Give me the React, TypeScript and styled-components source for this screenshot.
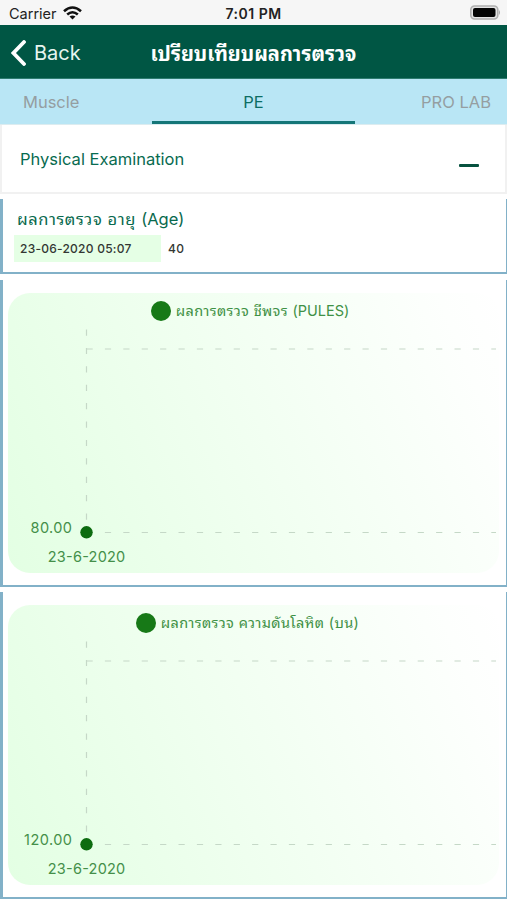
import React from "react";
import styled, { createGlobalStyle } from "styled-components";

const Global = createGlobalStyle`
  * { box-sizing: border-box; }
  body { margin: 0; background: #fff; font-family: Inter, "Noto Sans Thai Looped", "Noto Sans Thai", Loma, "Noto Sans", sans-serif; }
`;

const Screen = styled.div`
  width: 507px;
  height: 900px;
  overflow: hidden;
  display: flex;
  flex-direction: column;
  background: #fff;
`;

const StatusBar = styled.div`
  height: 25px;
  flex: none;
  display: grid;
  grid-template-columns: 1fr auto 1fr;
  align-items: center;
  padding: 3px 6px 0 9px;
  background: #f6f6f6;
  color: #222;
  font-size: 14.5px;
  line-height: 20px;
`;

const Carrier = styled.div`
  display: flex;
  align-items: center;
  gap: 6px;
`;

const SignalIcon = styled.svg`
  display: block;
  margin-bottom: 2px;
`;

const Clock = styled.div`
  margin-right: 3px;
  font-weight: 600;
  font-size: 14px;
  letter-spacing: 0.5px;
`;

const Battery = styled.svg`
  justify-self: end;
  display: block;
  margin-bottom: 3px;
`;

const NavBar = styled.header`
  height: 54px;
  flex: none;
  display: grid;
  grid-template-columns: 1fr auto 1fr;
  align-items: center;
  padding: 1px 11px 0;
  background: #005644;
  border-bottom: 1px solid #2d7c70;
  color: #fff;
`;

const BackButton = styled.div`
  display: flex;
  align-items: center;
  gap: 8px;
  padding-top: 1px;
  color: #e6f5f0;
  font-size: 20px;
`;

const Latin = styled.span`
  white-space: nowrap;
`;

const Thai = styled.span<{ $track: number }>`
  white-space: pre;
  letter-spacing: ${(p) => p.$track}px;
`;

const NavTitle = styled.h1`
  margin: 0;
  padding-top: 4px;
  font-size: 20px;
  line-height: 28px;
  font-weight: 700;
`;

const Tabs = styled.nav`
  height: 46px;
  flex: none;
  display: grid;
  grid-template-columns: 152px 203px 152px;
  background: #b9e6f5;
  border-bottom: 1px solid #dcecf0;
`;

const Tab = styled.div<{ $active?: boolean; $align?: string; $pad?: string }>`
  padding: ${(p) => p.$pad ?? "0"};
  text-align: ${(p) => p.$align ?? "center"};
  font-size: 16.5px;
  line-height: 46px;
  height: 45px;
  color: ${(p) => (p.$active ? "#0c6d63" : "#959ea1")};
  box-shadow: ${(p) => (p.$active ? "inset 0 -3px #147678" : "none")};
`;

const SectionHeader = styled.div`
  height: 69px;
  flex: none;
  display: flex;
  align-items: center;
  justify-content: space-between;
  padding: 0 26px 0 18px;
  border: 2px solid #f1f1f1;
  border-top-width: 0;
  color: #086b50;
  font-size: 16.5px;
`;

const Minus = styled.div`
  width: 20px;
  height: 3px;
  margin-top: 14px;
  border-radius: 1px;
  background: #07523f;
`;

const Panels = styled.main`
  display: flex;
  flex-direction: column;
  gap: 5px;
  padding-top: 5px;
`;

const Panel = styled.section<{ $height: number }>`
  height: ${(p) => p.$height}px;
  flex: none;
  border: solid #82b1c8;
  border-width: 0 1px 2px 3px;
`;

const AgePanel = styled(Panel)`
  padding: 7px 11px;
  margin-bottom: 1px;
`;

const AgeTitle = styled.div`
  padding-left: 3px;
  height: 28px;
  line-height: 26px;
  font-size: 16.5px;
  color: #08694d;
`;

const Reading = styled.div`
  display: flex;
  align-items: center;
  gap: 7px;
  color: #333733;
  font-size: 12px;
  font-weight: 500;
  line-height: 28px;
  letter-spacing: 0.25px;
`;

const Stamp = styled.div`
  width: 147px;
  height: 27px;
  padding-left: 6px;
  background: #e5ffe5;
`;

const Value = styled.div`
  padding-top: 1px;
`;

const ChartCard = styled.div`
  display: flex;
  flex-direction: column;
  height: 280px;
  margin: 13px 7px 0 5px;
  border-radius: 22px;
  background: linear-gradient(68deg, #e3ffe3 0%, #eeffee 38%, #fdfffd 90%, #ffffff 100%);
`;

const Legend = styled.div<{ $nudge: number }>`
  height: 36px;
  flex: none;
  display: flex;
  align-items: center;
  justify-content: center;
  gap: 5px;
  padding-right: ${(p) => p.$nudge}px;
  color: #3f9145;
  font-size: 14.5px;
  line-height: 20px;
`;

const Swatch = styled.span`
  width: 20px;
  height: 20px;
  border-radius: 50%;
  background: #177917;
`;

const Plot = styled.svg`
  display: block;
  fill: #448f49;
  font-size: 14.5px;
`;

interface ChartProps {
  label: string;
  unit?: string;
  value: string;
  nudge: number;
}

function Chart({ label, unit, value, nudge }: ChartProps) {
  return (
    <Panel $height={307}>
      <ChartCard>
        <Legend $nudge={nudge}>
          <Swatch />
          <span>
            <Thai $track={0.36}>{label}</Thai>
            {unit && <Latin>{unit}</Latin>}
          </span>
        </Legend>
        <Plot width="491" height="244" viewBox="8 329 491 244">
          <g stroke="#c5d8c7" strokeWidth="1.2" strokeDasharray="6.2 12.2">
            <path d="M86.5 329.5V532" />
            <path d="M86.5 349H496" />
            <path d="M86.5 532.5H496" />
          </g>
          <circle cx="86.5" cy="532.3" r="6.2" fill="#0d6c10" />
          <text x="72" y="532.5" textAnchor="end" textLength={value.length > 5 ? 48 : 41.5}>
            {value}
          </text>
          <text x="86.5" y="562" textAnchor="middle" textLength="77.5">
            23-6-2020
          </text>
        </Plot>
      </ChartCard>
    </Panel>
  );
}

export default function App() {
  return (
    <Screen>
      <Global />
      <StatusBar>
        <Carrier>
          <span>Carrier</span>
          <SignalIcon width="19" height="14" viewBox="0 0 19 14" fill="none" stroke="#111" strokeWidth="2.6">
            <path d="M1 5.2Q9.5-2.2 18 5.2" />
            <path d="M4.2 8.5Q9.5 4 14.8 8.5" />
            <path d="M9.5 13.5L6.5 10.6Q9.5 8.2 12.5 10.6Z" fill="#111" stroke="none" />
          </SignalIcon>
        </Carrier>
        <Clock>7:01 PM</Clock>
        <Battery width="31" height="15" viewBox="0 0 31 15">
          <rect x="0.8" y="1" width="27" height="13" rx="3.8" fill="#e4e4e4" stroke="#b0b0b0" strokeWidth="1.6" />
          <rect x="3" y="3" width="22.5" height="9" rx="2" fill="#050505" />
          <path d="M29 5Q31 7.5 29 10Z" fill="#aaa" />
        </Battery>
      </StatusBar>
      <NavBar>
        <BackButton>
          <svg width="15" height="26" viewBox="0 0 15 26" fill="none" stroke="#fff" strokeWidth="3.8" strokeLinecap="round">
            <path d="M13 2L2.4 13L13 24" />
          </svg>
          <Latin>Back</Latin>
        </BackButton>
        <NavTitle>
          <Thai $track={0}>เปรียบเทียบผลการตรวจ</Thai>
        </NavTitle>
      </NavBar>
      <Tabs>
        <Tab $align="left" $pad="0 0 0 23px">Muscle</Tab>
        <Tab $active>PE</Tab>
        <Tab $align="right" $pad="0 16px 0 0">PRO LAB</Tab>
      </Tabs>
      <SectionHeader>
        <Latin>Physical Examination</Latin>
        <Minus />
      </SectionHeader>
      <Panels>
        <AgePanel $height={75}>
          <AgeTitle>
            <Thai $track={0.6}>{"ผลการตรวจ อายุ "}</Thai>
            <Latin>(Age)</Latin>
          </AgeTitle>
          <Reading>
            <Stamp>23-06-2020 05:07</Stamp>
            <Value>40</Value>
          </Reading>
        </AgePanel>
        <Chart label="ผลการตรวจ ชีพจร " unit="(PULES)" value="80.00" nudge={7} />
        <Chart label="ผลการตรวจ ความดันโลหิต (บน)" value="120.00" nudge={12} />
      </Panels>
    </Screen>
  );
}
